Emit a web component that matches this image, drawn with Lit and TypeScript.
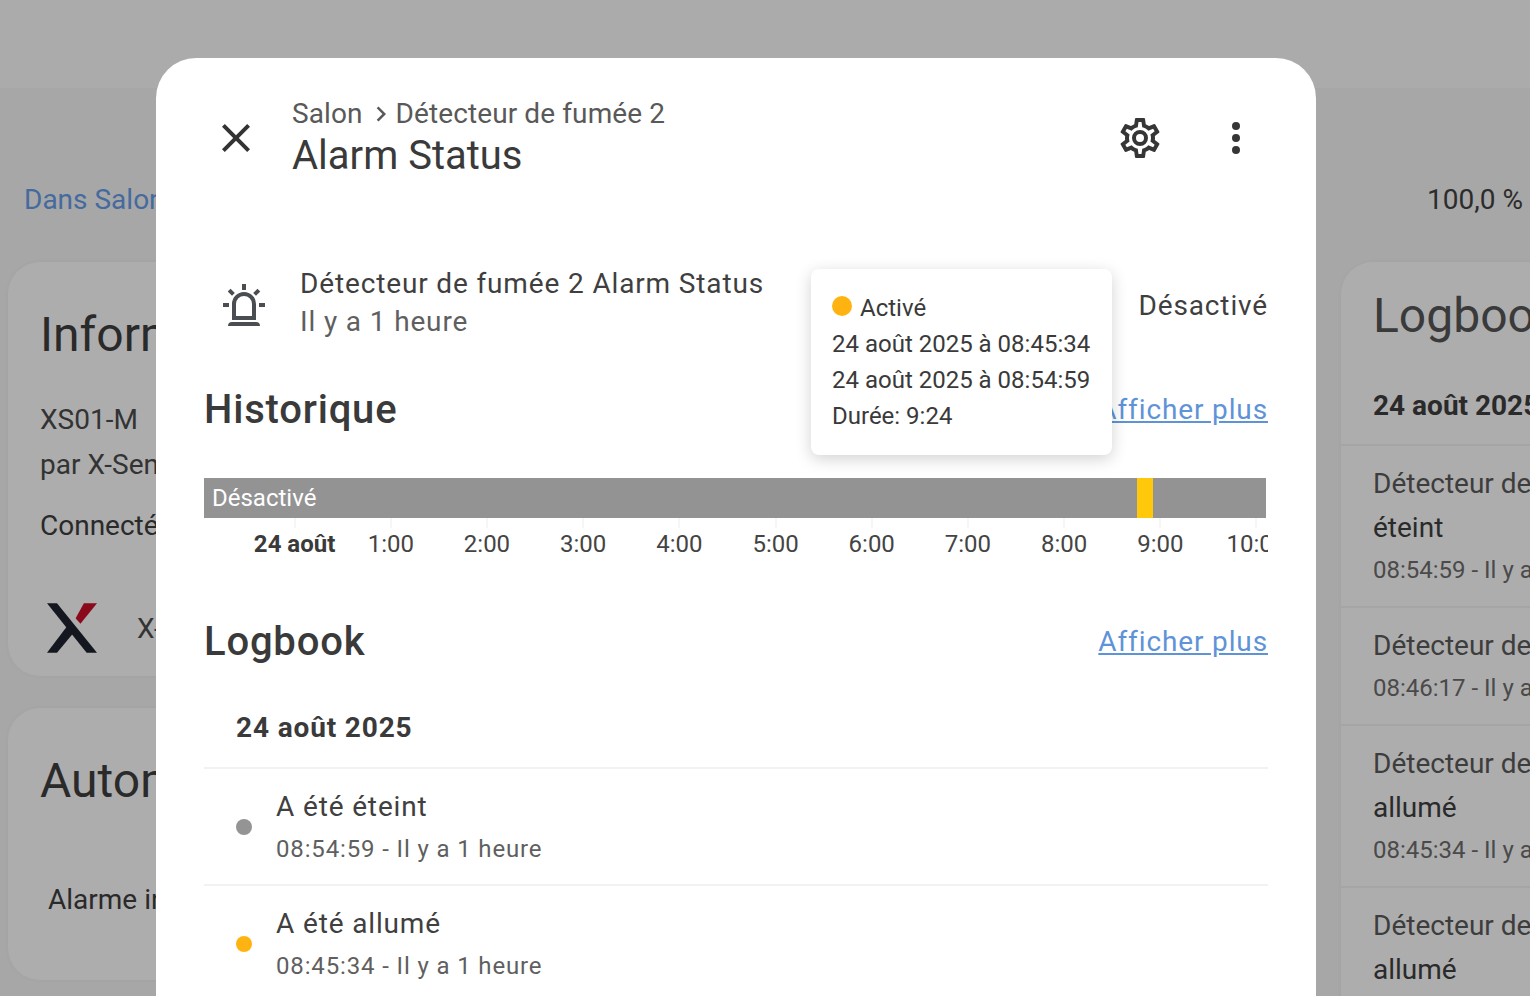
import { LitElement, html, css, svg } from "lit";
import { customElement } from "lit/decorators.js";

const icon = (d: string, cls = "") => html`<svg class="icon ${cls}" viewBox="0 0 24 24" aria-hidden="true">${svg`<path d=${d}></path>`}</svg>`;
const CLOSE = "M19,6.41L17.59,5L12,10.59L6.41,5L5,6.41L10.59,12L5,17.59L6.41,19L12,13.41L17.59,19L19,17.59L13.41,12L19,6.41Z";
const COG = "M12,8A4,4 0 0,1 16,12A4,4 0 0,1 12,16A4,4 0 0,1 8,12A4,4 0 0,1 12,8M12,10A2,2 0 0,0 10,12A2,2 0 0,0 12,14A2,2 0 0,0 14,12A2,2 0 0,0 12,10M10,22C9.75,22 9.54,21.82 9.5,21.58L9.13,18.93C8.5,18.68 7.96,18.34 7.44,17.94L4.95,18.95C4.73,19.03 4.46,18.95 4.34,18.73L2.34,15.27C2.21,15.05 2.27,14.78 2.46,14.63L4.57,12.97L4.5,12L4.57,11L2.46,9.37C2.27,9.22 2.21,8.95 2.34,8.73L4.34,5.27C4.46,5.05 4.73,4.96 4.95,5.05L7.44,6.05C7.96,5.66 8.5,5.32 9.13,5.07L9.5,2.42C9.54,2.18 9.75,2 10,2H14C14.25,2 14.46,2.18 14.5,2.42L14.87,5.07C15.5,5.32 16.04,5.66 16.56,6.05L19.05,5.05C19.27,4.96 19.54,5.05 19.66,5.27L21.66,8.73C21.79,8.95 21.73,9.22 21.54,9.37L19.43,11L19.5,12L19.43,13L21.54,14.63C21.73,14.78 21.79,15.05 21.66,15.27L19.66,18.73C19.54,18.95 19.27,19.04 19.05,18.95L16.56,17.95C16.04,18.34 15.5,18.68 14.87,18.93L14.5,21.58C14.46,21.82 14.25,22 14,22H10M11.25,4L10.88,6.61C9.68,6.86 8.62,7.5 7.85,8.39L5.44,7.35L4.69,8.65L6.8,10.2C6.4,11.37 6.4,12.64 6.8,13.8L4.68,15.36L5.43,16.66L7.86,15.62C8.63,16.5 9.68,17.14 10.87,17.38L11.24,20H12.76L13.13,17.39C14.32,17.14 15.37,16.5 16.14,15.62L18.57,16.66L19.32,15.36L17.2,13.81C17.6,12.64 17.6,11.37 17.2,10.2L19.31,8.65L18.56,7.35L16.15,8.39C15.38,7.5 14.32,6.86 13.12,6.62L12.75,4H11.25Z";
const DOTS = "M12,16A2,2 0 0,1 14,18A2,2 0 0,1 12,20A2,2 0 0,1 10,18A2,2 0 0,1 12,16M12,10A2,2 0 0,1 14,12A2,2 0 0,1 12,14A2,2 0 0,1 10,12A2,2 0 0,1 12,10M12,4A2,2 0 0,1 14,6A2,2 0 0,1 12,8A2,2 0 0,1 10,6A2,2 0 0,1 12,4Z";
const ALARM = "M6,6.9L3.87,4.78L5.28,3.37L7.4,5.5L6,6.9M13,1V4H11V1H13M20.13,4.78L18,6.9L16.6,5.5L18.72,3.37L20.13,4.78M4.5,10.5V12.5H1.5V10.5H4.5M19.5,10.5H22.5V12.5H19.5V10.5M6,20H18A2,2 0 0,1 20,22H4A2,2 0 0,1 6,20M12,5A6,6 0 0,1 18,11V19H6V11A6,6 0 0,1 12,5M12,7A4,4 0 0,0 8,11V17H16V11A4,4 0 0,0 12,7Z";
const CHEVRON = "M8.59,16.58L13.17,12L8.59,7.41L10,6L16,12L10,18L8.59,16.58Z";

const HOURS = ["24 août", "1:00", "2:00", "3:00", "4:00", "5:00", "6:00", "7:00", "8:00", "9:00", "10:00"];

@customElement("app-root")
export class AppRoot extends LitElement {
  static styles = css`
    :host { display: block; position: relative; width: 1530px; height: 996px; overflow: hidden; background: #a7a7a7; font-family: Roboto, "Liberation Sans", sans-serif; color: #2a2a2a; }
    * { box-sizing: border-box; }
    .topbar { height: 88px; background: #ababab; }
    .meta { display: flex; justify-content: space-between; align-items: center; height: 56px; margin-top: 83px; padding: 0 7px 0 24px; font-size: 28px; }
    .meta a { color: #456a9e; }
    .meta span { color: #2c2c2c; }
    .board { display: grid; grid-template-columns: 500px 833px 500px; margin-top: 35px; padding-left: 8px; width: 1900px; }
    .col { display: flex; flex-direction: column; gap: 32px; }
    .card { background: #adadad; border-radius: 32px; box-shadow: 0 0 4px rgba(0,0,0,.04); }
    .card h2 { margin: 0; font-size: 48px; font-weight: 400; line-height: 56px; color: #2a2a2a; }
    .info { height: 414px; padding: 45px 32px 0 32px; }
    .info p { margin: 0; font-size: 28px; line-height: 45px; color: #333; }
    .info .first { margin-top: 34px; }
    .info .conn { margin-top: 16px; color: #2a2a2a; }
    .brand { display: flex; align-items: center; gap: 40px; margin-top: 55px; margin-left: 7px; font-size: 28px; color: #333; }
    .brand svg { width: 50px; height: 50px; flex: none; }
    .auto { height: 272px; padding: 45px 32px 0 32px; }
    .auto p { margin: 73px 0 0 8px; font-size: 28px; line-height: 36px; color: #2a2a2a; }
    .log { height: 800px; padding-top: 26px; }
    .log h2 { padding-left: 32px; color: #3a3a3a; }
    .log .day { padding: 44px 0 0 32px; height: 102px; font-size: 28px; font-weight: 700; line-height: 36px; border-bottom: 2px solid #a5a5a5; }
    .log .row { padding: 15px 0 16px 32px; border-bottom: 2px solid #a5a5a5; font-size: 28px; line-height: 44px; color: #2a2a2a; }
    .log .row .t { color: #3d3d3d; line-height: 45px; }
    .log .row .s { font-size: 24px; line-height: 40px; color: #4a4a4a; }

    .scrim-dialog { position: absolute; left: 156px; top: 58px; width: 1160px; height: 1000px; background: #fff; border-radius: 40px; padding: 0 48px; color: #333; }
    .head { display: flex; align-items: center; height: 160px; }
    .icon { width: 48px; height: 48px; fill: currentColor; flex: none; display: block; }
    .close { margin-left: 8px; color: #333; }
    .titles { margin: 0 0 4px 32px; flex: 1; }
    .crumb { display: flex; align-items: center; font-size: 28px; line-height: 40px; color: #595959; letter-spacing: .1px; }
    .crumb .icon { width: 30px; height: 30px; margin: 0 0 0 3px; }
    .title { font-size: 40px; line-height: 44px; color: #3a3a3a; }
    .act { color: #363636; }
    .act + .act { margin-left: 48px; margin-right: 8px; }
    .entity { display: flex; align-items: center; height: 80px; margin-top: 45px; letter-spacing: .857px; }
    .entity > .icon { color: #4a4d52; margin: 6px 32px 0 16px; }
    .entity .n { font-size: 28px; line-height: 38px; color: #3f3f3f; }
    .entity .a { font-size: 28px; line-height: 38px; color: #5f5f5f; }
    .entity .grow { flex: 1; }
    .entity .st { font-size: 28px; color: #3f3f3f; margin-top: 4px; }
    .sec { display: flex; justify-content: space-between; align-items: center; height: 48px; }
    .sec h3 { margin: 0; font-size: 40px; font-weight: 500; line-height: 48px; color: #3a3a3a; letter-spacing: .8px; }
    .sec a { font-size: 28px; color: #5f93d8; text-decoration: underline; letter-spacing: .87px; margin-bottom: 2px; }
    .hist { margin-top: 43px; }
    .bar { display: flex; height: 40px; margin-top: 44px; width: 1062px; background: #939393; font-size: 24px; line-height: 40px; color: #fff; }
    .bar .off { width: 933px; padding-left: 8px; }
    .bar .on { width: 16px; background: #ffc80a; }
    .axis { display: flex; width: 1064px; height: 53px; padding-left: 42.5px; overflow: hidden; }
    .axis div { flex: none; width: 96.2px; text-align: center; font-size: 24px; line-height: 32px; padding-top: 10px; height: 53px; color: #444; background: linear-gradient(#f6f6f6,#f6f6f6) center top / 2px 10px no-repeat; white-space: nowrap; }
    .axis div:first-child { font-weight: 700; color: #3a3a3a; }
    .lb { margin-top: 47px; }
    .date { height: 103px; padding: 43px 0 0 32px; font-size: 28px; font-weight: 700; line-height: 38px; letter-spacing: .857px; color: #3a3a3a; border-bottom: 2px solid #f2f2f2; }
    .item { display: flex; align-items: center; height: 117px; border-bottom: 2px solid #f2f2f2; letter-spacing: .857px; }
    .dot { width: 16px; height: 16px; border-radius: 50%; margin: 0 24px 0 32px; flex: none; }
    .item .t { font-size: 28px; line-height: 40px; color: #404040; padding-top: 1px; }
    .item .s { font-size: 24px; line-height: 36px; color: #5f5f5f; margin-top: 4px; }
    .tip { position: absolute; left: 655px; top: 211px; width: 301px; height: 186px; background: #fff; border-radius: 8px; box-shadow: 0 4px 16px rgba(0,0,0,.18); padding: 21px; font-size: 24px; line-height: 36px; color: #3a3a3a; }
    .tip .l { display: flex; align-items: center; }
    .tip .d { width: 20px; height: 20px; border-radius: 50%; background: #ffb310; margin-right: 8px; margin-top: -4px; }
  `;

  render() {
    return html`
      <div class="topbar"></div>
      <div class="meta"><a>Dans Salon</a><span>100,0 %</span></div>
      <div class="board">
        <div class="col">
          <div class="card info">
            <h2>Informations</h2>
            <p class="first">XS01-M</p>
            <p>par X-Sense</p>
            <p class="conn">Connecté via X-Sense</p>
            <div class="brand">
              <svg viewBox="143 72 145 143" aria-hidden="true">
                <polygon fill="#14171f" points="143,72 172,72 288,215 258,215"></polygon>
                <polygon fill="#14171f" points="143,215 172,215 222,155 205,133"></polygon>
                <polygon fill="#8a0a1c" points="250,72 288,72 240,131 226,115"></polygon>
              </svg>
              <span>X-Sense</span>
            </div>
          </div>
          <div class="card auto">
            <h2>Automatisations</h2>
            <p>Alarme incendie</p>
          </div>
        </div>
        <div></div>
        <div class="card log">
          <h2>Logbook</h2>
          <div class="day">24 août 2025</div>
          <div class="row"><div class="t">Détecteur de fumée 2</div><div>éteint</div><div class="s">08:54:59 - Il y a 1 heure</div></div>
          <div class="row"><div class="t">Détecteur de fumée 2</div><div class="s">08:46:17 - Il y a 1 heure</div></div>
          <div class="row"><div class="t">Détecteur de fumée 2</div><div>allumé</div><div class="s">08:45:34 - Il y a 1 heure</div></div>
          <div class="row"><div class="t">Détecteur de fumée 2</div><div>allumé</div></div>
        </div>
      </div>

      <div class="scrim-dialog">
        <div class="head">
          ${icon(CLOSE, "close")}
          <div class="titles">
            <div class="crumb"><span>Salon</span>${icon(CHEVRON)}<span>Détecteur de fumée 2</span></div>
            <div class="title">Alarm Status</div>
          </div>
          ${icon(COG, "act")}
          ${icon(DOTS, "act")}
        </div>
        <div class="entity">
          ${icon(ALARM)}
          <div>
            <div class="n">Détecteur de fumée 2 Alarm Status</div>
            <div class="a">Il y a 1 heure</div>
          </div>
          <div class="grow"></div>
          <div class="st">Désactivé</div>
        </div>
        <div class="sec hist"><h3>Historique</h3><a>Afficher plus</a></div>
        <div class="bar"><div class="off">Désactivé</div><div class="on"></div></div>
        <div class="axis">${HOURS.map((h) => html`<div>${h}</div>`)}</div>
        <div class="sec lb"><h3>Logbook</h3><a>Afficher plus</a></div>
        <div class="date">24 août 2025</div>
        <div class="item"><span class="dot" style="background:#949494"></span><div><div class="t">A été éteint</div><div class="s">08:54:59 - Il y a 1 heure</div></div></div>
        <div class="item"><span class="dot" style="background:#ffb310"></span><div><div class="t">A été allumé</div><div class="s">08:45:34 - Il y a 1 heure</div></div></div>
        <div class="tip">
          <div class="l"><span class="d"></span>Activé</div>
          <div>24 août 2025 à 08:45:34</div>
          <div>24 août 2025 à 08:54:59</div>
          <div>Durée: 9:24</div>
        </div>
      </div>
    `;
  }
}
